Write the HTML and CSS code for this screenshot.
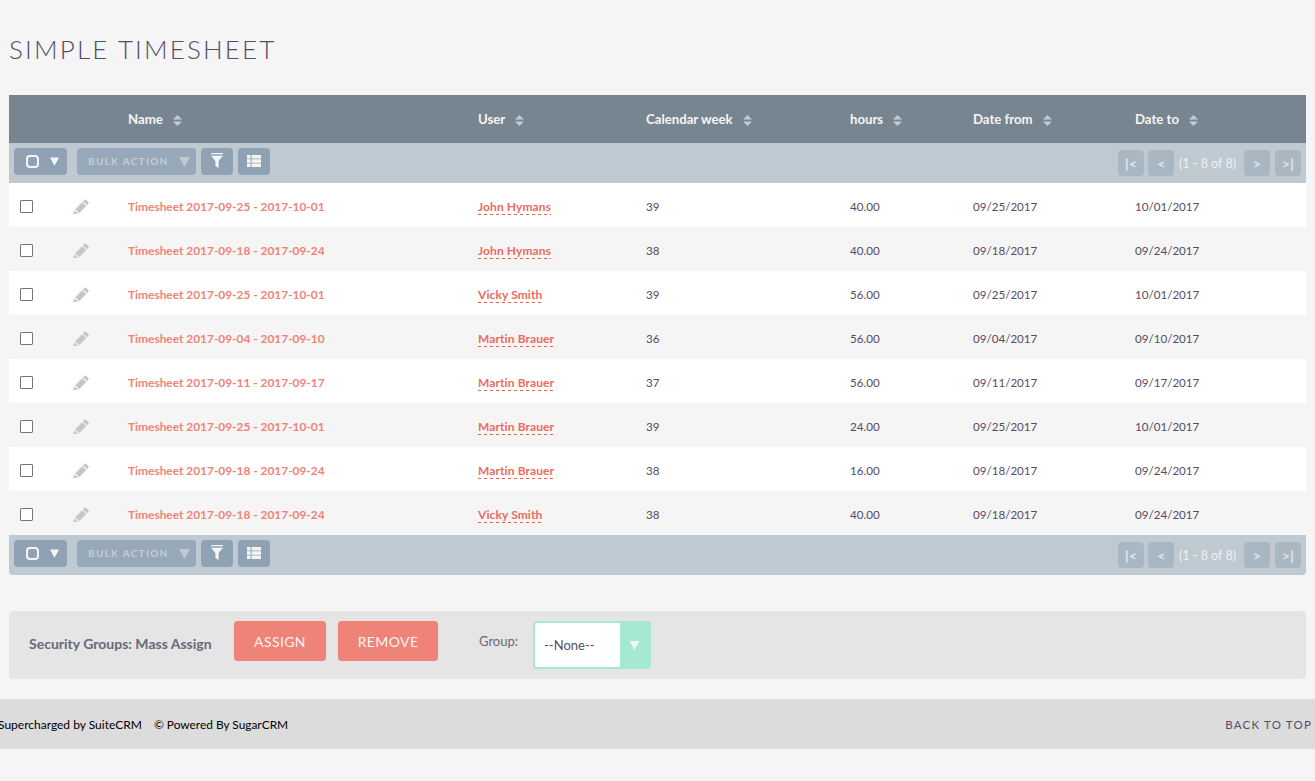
FILE: index.html
```html
<!DOCTYPE html>
<html lang="en">
<head>
<meta charset="utf-8">
<title>Simple Timesheet</title>
<link rel="stylesheet" href="styles.css">
</head>
<body>
<svg class="defs" width="0" height="0" aria-hidden="true">
  <symbol id="i-sort" viewBox="0 0 9 11"><path d="M4.500 0 9 4.400H0zM0 6.600h9L4.500 11z"/></symbol>
  <symbol id="i-down" viewBox="0 0 12 11"><path d="M0 0h12L6 11z"/></symbol>
  <symbol id="i-filter" viewBox="0 0 12 15"><path d="M0 0h12v1.300H0zM0 2.800h12L7.600 8V15L4.400 13V8z"/></symbol>
  <symbol id="i-list" viewBox="0 0 14 12"><path d="M0 0h3.600v3.400H0zM4.600 0H14v3.400H4.600zM0 4.300h3.600v3.400H0zM4.600 4.300H14v3.400H4.600zM0 8.600h3.600V12H0zM4.600 8.600H14V12H4.600z"/></symbol>
  <symbol id="i-edit" viewBox="0 0 16 15"><path d="M11.200.9a1.200 1.200 0 0 1 1.600-.2l2.600 2.300a1.200 1.200 0 0 1 .1 1.600l-1.500 1.600-4.300-3.800zM9 3.200l4.300 3.800-7 7.300L2 10.500zM1.300 11.400l4 3.500L0 15z"/></symbol>
</svg>
<main class="page">
  <h1 class="title">SIMPLE TIMESHEET</h1>
  <table class="list">
    <colgroup>
      <col class="c-check"><col class="c-edit"><col class="c-name"><col class="c-user"><col class="c-week"><col class="c-hours"><col class="c-from"><col class="c-to">
    </colgroup>
    <thead>
      <tr class="head">
        <th></th><th></th>
        <th>Name<svg class="sort"><use href="#i-sort"/></svg></th>
        <th>User<svg class="sort"><use href="#i-sort"/></svg></th>
        <th>Calendar week<svg class="sort"><use href="#i-sort"/></svg></th>
        <th>hours<svg class="sort"><use href="#i-sort"/></svg></th>
        <th>Date from<svg class="sort"><use href="#i-sort"/></svg></th>
        <th>Date to<svg class="sort"><use href="#i-sort"/></svg></th>
      </tr>
      <tr class="tools">
        <td colspan="8">
          <div class="bar">
            <button class="tb sel"><span class="ring"></span><svg class="dn"><use href="#i-down"/></svg></button>
            <button class="tb bulk">BULK ACTION<svg class="dn"><use href="#i-down"/></svg></button>
            <button class="tb sq"><svg class="fil"><use href="#i-filter"/></svg></button>
            <button class="tb sq"><svg class="lst"><use href="#i-list"/></svg></button>
            <div class="pager">
              <button class="pg">|&lt;</button><button class="pg">&lt;</button>
              <span class="count">(1 - 8 of 8)</span>
              <button class="pg">&gt;</button><button class="pg">&gt;|</button>
            </div>
          </div>
        </td>
      </tr>
    </thead>
    <tbody>
      <tr><td><span class="cb"></span></td><td><svg class="edit"><use href="#i-edit"/></svg></td><td><a class="nm">Timesheet 2017-09-25 - 2017-10-01</a></td><td><a class="us">John Hymans</a></td><td>39</td><td>40.00</td><td>09/25/2017</td><td>10/01/2017</td></tr>
      <tr><td><span class="cb"></span></td><td><svg class="edit"><use href="#i-edit"/></svg></td><td><a class="nm">Timesheet 2017-09-18 - 2017-09-24</a></td><td><a class="us">John Hymans</a></td><td>38</td><td>40.00</td><td>09/18/2017</td><td>09/24/2017</td></tr>
      <tr><td><span class="cb"></span></td><td><svg class="edit"><use href="#i-edit"/></svg></td><td><a class="nm">Timesheet 2017-09-25 - 2017-10-01</a></td><td><a class="us">Vicky Smith</a></td><td>39</td><td>56.00</td><td>09/25/2017</td><td>10/01/2017</td></tr>
      <tr><td><span class="cb"></span></td><td><svg class="edit"><use href="#i-edit"/></svg></td><td><a class="nm">Timesheet 2017-09-04 - 2017-09-10</a></td><td><a class="us">Martin Brauer</a></td><td>36</td><td>56.00</td><td>09/04/2017</td><td>09/10/2017</td></tr>
      <tr><td><span class="cb"></span></td><td><svg class="edit"><use href="#i-edit"/></svg></td><td><a class="nm">Timesheet 2017-09-11 - 2017-09-17</a></td><td><a class="us">Martin Brauer</a></td><td>37</td><td>56.00</td><td>09/11/2017</td><td>09/17/2017</td></tr>
      <tr><td><span class="cb"></span></td><td><svg class="edit"><use href="#i-edit"/></svg></td><td><a class="nm">Timesheet 2017-09-25 - 2017-10-01</a></td><td><a class="us">Martin Brauer</a></td><td>39</td><td>24.00</td><td>09/25/2017</td><td>10/01/2017</td></tr>
      <tr><td><span class="cb"></span></td><td><svg class="edit"><use href="#i-edit"/></svg></td><td><a class="nm">Timesheet 2017-09-18 - 2017-09-24</a></td><td><a class="us">Martin Brauer</a></td><td>38</td><td>16.00</td><td>09/18/2017</td><td>09/24/2017</td></tr>
      <tr><td><span class="cb"></span></td><td><svg class="edit"><use href="#i-edit"/></svg></td><td><a class="nm">Timesheet 2017-09-18 - 2017-09-24</a></td><td><a class="us">Vicky Smith</a></td><td>38</td><td>40.00</td><td>09/18/2017</td><td>09/24/2017</td></tr>
    </tbody>
    <tfoot>
      <tr class="tools">
        <td colspan="8">
          <div class="bar">
            <button class="tb sel"><span class="ring"></span><svg class="dn"><use href="#i-down"/></svg></button>
            <button class="tb bulk">BULK ACTION<svg class="dn"><use href="#i-down"/></svg></button>
            <button class="tb sq"><svg class="fil"><use href="#i-filter"/></svg></button>
            <button class="tb sq"><svg class="lst"><use href="#i-list"/></svg></button>
            <div class="pager">
              <button class="pg">|&lt;</button><button class="pg">&lt;</button>
              <span class="count">(1 - 8 of 8)</span>
              <button class="pg">&gt;</button><button class="pg">&gt;|</button>
            </div>
          </div>
        </td>
      </tr>
    </tfoot>
  </table>
  <section class="mass">
    <span class="mass-label">Security Groups: Mass Assign</span>
    <button class="act assign">ASSIGN</button>
    <button class="act remove">REMOVE</button>
    <span class="group">Group:</span>
    <div class="select"><span class="sel-text">--None--</span><span class="sel-arrow"><svg class="dn"><use href="#i-down"/></svg></span></div>
  </section>
</main>
<footer class="foot">
  <span class="foot-a">Supercharged by SuiteCRM</span>
  <span class="foot-b">© Powered By SugarCRM</span>
  <span class="top">BACK TO TOP</span>
</footer>
</body>
</html>
```
FILE: styles.css
```css
* { box-sizing: border-box; }
html, body { margin: 0; padding: 0; }
body {
  background: #f5f5f5;
  color: #534d64;
  font-family: Lato, "Open Sans", sans-serif;
  font-size: 13px;
  height: 781px;
  overflow: hidden;
}
.defs { position: absolute; }
.page { padding: 0 9px; }
.title {
  margin: 0;
  padding-top: 34px;
  height: 95px;
  font-weight: 300;
  font-size: 26px;
  line-height: 31px;
  letter-spacing: 2.15px;
  color: #534d64;
}
.list { width: 1297px; border-collapse: collapse; table-layout: fixed; }
.c-check { width: 55px; }
.c-edit { width: 55px; }
.c-name { width: 350px; }
.c-user { width: 168px; }
.c-week { width: 204px; }
.c-hours { width: 123px; }
.c-from { width: 162px; }
.c-to { width: 180px; }

.head { background: #778591; height: 48px; }
.head th {
  padding: 0 0 0 9px;
  text-align: left;
  font-size: 13.2px;
  font-weight: 700;
  color: #f5f5f5;
  vertical-align: middle;
}
.sort { width: 9px; height: 11px; margin-left: 10px; vertical-align: -2px; fill: #c2cbd3; }

.tools > td { padding: 0; background: #bfc9d2; height: 40px; }
tfoot .tools > td { border-radius: 0 0 4px 4px; }
.bar { display: flex; align-items: flex-start; height: 40px; padding: 5px 5px 0; }
.tb {
  display: flex;
  align-items: center;
  justify-content: center;
  height: 27px;
  border: 0;
  padding: 0;
  border-radius: 4px;
  background: #8fa2b3;
  color: #f5f5f5;
  font-family: inherit;
}
.sel { width: 53px; gap: 11px; justify-content: flex-start; padding-left: 12px; }
.ring { width: 13px; height: 13px; border: 2.500px solid #f5f5f5; border-radius: 4px; }
.dn { width: 9px; height: 9px; fill: #f5f5f5; }
.bulk {
  width: 119px;
  margin-left: 10px;
  gap: 10px;
  justify-content: flex-start;
  padding: 0 0 2px 11px;
  background: #97a8b8;
  color: #c5ced6;
  font-size: 10px;
  font-weight: 700;
  letter-spacing: 1.300px;
}
.bulk .dn { width: 11px; height: 10px; margin-top: 2px; fill: #bfc9d2; }
.sq { width: 32px; margin-left: 5px; }
.fil { width: 12px; height: 15px; fill: #f5f5f5; margin-top: -2px; }
.lst { width: 14px; height: 12px; fill: #f5f5f5; margin-top: -2px; }
.pager { display: flex; align-items: center; margin-left: auto; margin-top: 2px; }
.pg {
  width: 26px;
  height: 26px;
  margin-left: 4px;
  border: 0;
  padding: 0;
  border-radius: 4px;
  background: #a9b7c3;
  color: #e3e8ec;
  font-family: inherit;
  font-size: 14px;
  font-weight: 700;
}
.pg:last-child { margin-left: 5px; }
.count { width: 60px; margin-left: 5px; margin-right: 1px; color: #eef1f3; font-size: 12.500px; white-space: nowrap; }

tbody tr { height: 44px; background: #f5f5f5; }
tbody tr:nth-child(odd) { background: #fff; }
tbody td { padding: 3px 0 0 9px; font-size: 11.600px; color: #534d64; vertical-align: middle; }
tbody td:first-child { padding-left: 11px; }
.cb { display: block; width: 13px; height: 13px; border: 1px solid #767676; border-radius: 1px; background: #fff; }
.edit { display: block; width: 16px; height: 15px; fill: #c4c8cc; }
.nm { color: #f08377; font-weight: 700; font-size: 11.900px; }
.us {
  color: #ed6a5c;
  font-weight: 700;
  font-size: 12px;
  letter-spacing: 0.100px;
  padding-bottom: 1px;
  background: repeating-linear-gradient(to right, #ee5f52 0 3px, transparent 3px 6px) left bottom / 100% 1px no-repeat;
}

.mass {
  display: flex;
  align-items: center;
  height: 68px;
  margin-top: 36px;
  padding-left: 20px;
  background: #e5e5e5;
  border-radius: 4px;
}
.mass-label { width: 205px; margin-top: -3px; font-size: 14px; font-weight: 700; color: #6b6878; white-space: nowrap; }
.act {
  height: 40px;
  margin-top: -8px;
  border: 0;
  border-radius: 4px;
  background: #f08377;
  color: #f5f5f5;
  font-family: inherit;
  font-size: 14px;
  letter-spacing: 0.400px;
}
.assign { width: 92px; }
.remove { width: 100px; margin-left: 12px; }
.group { margin-left: 41px; margin-top: -9px; font-size: 13px; color: #6b6878; }
.select {
  display: flex;
  width: 118px;
  height: 48px;
  margin-left: 15px;
  border: 2px solid #a5e8d3;
  border-radius: 4px;
  background: #fff;
}
.sel-text { flex: 1; padding-left: 9px; line-height: 44px; font-size: 13px; color: #534d64; }
.sel-arrow { display: flex; align-items: center; justify-content: center; width: 29px; background: #a5e8d3; }
.sel-arrow .dn { width: 13px; height: 9px; }

.foot {
  display: flex;
  align-items: center;
  height: 50px;
  margin-top: 20px;
  padding-top: 1px;
  background: #dcdcdc;
  color: #000;
  font-size: 12px;
}
.foot-a { margin-left: -2px; }
.foot-b { margin-left: 12px; font-size: 11.900px; }
.top { margin-left: auto; margin-right: 3px; font-size: 11.500px; color: #534d64; letter-spacing: 1.200px; }
```
